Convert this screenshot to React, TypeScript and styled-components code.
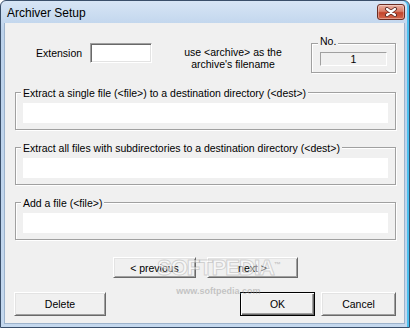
import { createGlobalStyle } from 'styled-components'
import styled from 'styled-components'

const GlobalStyle = createGlobalStyle`
  html, body {
    margin: 0;
    padding: 0;
    background: #ffffff;
  }
  #root {
    width: 410px;
    height: 328px;
  }
`

const Window = styled.div`
  box-sizing: border-box;
  width: 410px;
  height: 328px;
  display: flex;
  flex-direction: column;
  border: 1px solid #3a4f6a;
  border-radius: 6px 6px 0 0;
  background: linear-gradient(#d7e5f5 0, #bcd2eb 30px, #c4d8ee 100%);
  box-shadow: inset -2px 0 0 #4cc0ef;
  padding: 0 4px 3px 3px;
  font-family: 'Liberation Sans', Arial, sans-serif;
  font-size: 10.5px;
  color: #000;
`

const TitleBar = styled.div`
  height: 22px;
  flex: none;
  display: flex;
  align-items: flex-start;
  justify-content: space-between;
  padding-left: 3px;
`

const Title = styled.div`
  margin-top: 5px;
  font-size: 12px;
  line-height: 15px;
  color: #000;
`

const CloseButton = styled.div`
  box-sizing: border-box;
  margin-top: 3px;
  width: 28px;
  height: 16px;
  border: 1px solid #6b2c22;
  border-radius: 3px;
  background: linear-gradient(#eab0a2 0%, #d97e68 45%, #c2452c 55%, #d4684d 100%);
  box-shadow: inset 0 0 0 1px rgba(255, 255, 255, 0.35);
  display: flex;
  align-items: center;
  justify-content: center;
`

const Client = styled.div`
  position: relative;
  flex: 1;
  display: flex;
  flex-direction: column;
  background: #f0f0f0;
  border: 1px solid #9db3cc;
  border-top: none;
  padding: 12px 8px 0 10px;
`

const TopRow = styled.div`
  display: flex;
  align-items: flex-start;
  height: 39px;
`

const ExtensionWrap = styled.label`
  width: 158px;
  box-sizing: border-box;
  padding-left: 21px;
  margin-top: 8px;
  display: flex;
  align-items: center;
  gap: 8px;
`

const SunkenInput = styled.input`
  box-sizing: border-box;
  width: 62px;
  height: 20px;
  margin: 0;
  padding: 0 3px;
  border: 1px solid;
  border-color: #a0a0a0 #ffffff #ffffff #a0a0a0;
  box-shadow: inset 1px 1px 0 #696969, inset -1px -1px 0 #e3e3e3;
  background: #fff;
  font: inherit;
  outline: none;
`

const Note = styled.div`
  width: 120px;
  margin-top: 11px;
  text-align: center;
  line-height: 12px;
`

const Group = styled.fieldset<{ $pad: string }>`
  margin: 0;
  min-width: 0;
  border: 1px solid #a0a0a0;
  box-shadow: inset 1px 1px 0 #ffffff, 1px 1px 0 #ffffff;
  padding: ${(p) => p.$pad};
`

const Legend = styled.legend<{ $up?: boolean }>`
  margin-left: -2px;
  padding: ${(p) => (p.$up ? '0 2px 3px' : '3px 2px 0')};
  line-height: 13px;
  background: #f0f0f0;
`

const NumberGroup = styled(Group)`
  width: 85px;
  box-sizing: border-box;
  margin-left: 18px;
  margin-top: 0;
`

const NumberField = styled.div`
  box-sizing: border-box;
  height: 14px;
  border: 1px solid;
  border-color: #a0a0a0 #ffffff #ffffff #a0a0a0;
  text-align: center;
  line-height: 12px;
`

const PathGroup = styled(Group)<{ $first?: boolean }>`
  margin-top: ${(p) => (p.$first ? '10px' : '9px')};
`

const WhiteField = styled.input`
  display: block;
  box-sizing: border-box;
  width: 100%;
  height: 20px;
  margin: 0;
  padding: 0 3px;
  border: none;
  background: #fff;
  font: inherit;
  outline: none;
`

const NavRow = styled.div`
  display: flex;
  gap: 11px;
  margin-top: 17px;
  padding-left: 98px;
`

const ButtonRow = styled.div`
  display: flex;
  gap: 6px;
  margin-top: 14px;
  margin-left: -1px;
`

const Button = styled.button<{ $w: number; $h: number; $default?: boolean; $push?: boolean }>`
  box-sizing: border-box;
  width: ${(p) => p.$w}px;
  height: ${(p) => p.$h}px;
  margin: 0;
  margin-left: ${(p) => (p.$push ? 'auto' : '0')};
  padding: 0;
  background: #f0f0f0;
  font: inherit;
  color: #000;
  border: 1px solid;
  border-color: ${(p) => (p.$default ? '#000000' : '#ffffff #696969 #696969 #ffffff')};
  box-shadow: ${(p) =>
    p.$default
      ? 'inset 1px 1px 0 #ffffff, inset -1px -1px 0 #696969, inset -2px -2px 0 #a0a0a0'
      : 'inset 1px 1px 0 #e3e3e3, inset -1px -1px 0 #a0a0a0'};
`

const Watermark = styled.div`
  position: absolute;
  left: 152px;
  top: 229px;
  display: flex;
  flex-direction: column;
  align-items: center;
  pointer-events: none;
`

const WatermarkBig = styled.div`
  font-family: 'Liberation Sans', Arial, sans-serif;
  font-weight: bold;
  font-size: 22px;
  letter-spacing: -1px;
  color: rgba(255, 255, 255, 0.55);
  -webkit-text-stroke: 1px rgba(140, 140, 140, 0.35);
  line-height: 26px;
`

const Tm = styled.sup`
  font-size: 7px;
  -webkit-text-stroke: 0;
  color: rgba(150, 150, 150, 0.5);
`

const WatermarkSmall = styled.div`
  margin-top: 5px;
  font-family: 'Liberation Sans', Arial, sans-serif;
  font-weight: bold;
  font-size: 9px;
  color: rgba(150, 150, 150, 0.5);
`

const CloseIcon = () => (
  <svg width="14" height="10" viewBox="0 0 14 10">
    <path d="M3 2 L11 8 M11 2 L3 8" stroke="#5a2a25" strokeWidth="4" strokeLinecap="round" />
    <path d="M3 2 L11 8 M11 2 L3 8" stroke="#ffffff" strokeWidth="2.2" strokeLinecap="round" />
  </svg>
)

const groups = [
  'Extract a single file (<file>) to a destination directory (<dest>)',
  'Extract all files with subdirectories to a destination directory (<dest>)',
  'Add a file (<file>)',
]

const App = () => {
  return (
    <>
      <GlobalStyle />
      <Window>
        <TitleBar>
          <Title>Archiver Setup</Title>
          <CloseButton>
            <CloseIcon />
          </CloseButton>
        </TitleBar>
        <Client>
          <TopRow>
            <ExtensionWrap>
              Extension
              <SunkenInput />
            </ExtensionWrap>
            <Note>
              use &lt;archive&gt; as the
              <br />
              archive's filename
            </Note>
            <NumberGroup $pad="1px 8px 6px 8px">
              <Legend $up>No.</Legend>
              <NumberField>1</NumberField>
            </NumberGroup>
          </TopRow>
          {groups.map((label, i) => (
            <PathGroup key={label} $pad="3px 7px 6px 7px" $first={i === 0}>
              <Legend>{label}</Legend>
              <WhiteField />
            </PathGroup>
          ))}
          <NavRow>
            <Button $w={83} $h={21}>&lt; previous</Button>
            <Button $w={91} $h={21}>next &gt;</Button>
          </NavRow>
          <ButtonRow>
            <Button $w={92} $h={24}>Delete</Button>
            <Button $w={75} $h={24} $push $default>OK</Button>
            <Button $w={75} $h={24}>Cancel</Button>
          </ButtonRow>
          <Watermark>
            <WatermarkBig>
              SOFTPEDIA<Tm>™</Tm>
            </WatermarkBig>
            <WatermarkSmall>www.softpedia.com</WatermarkSmall>
          </Watermark>
        </Client>
      </Window>
    </>
  )
}

export default App
